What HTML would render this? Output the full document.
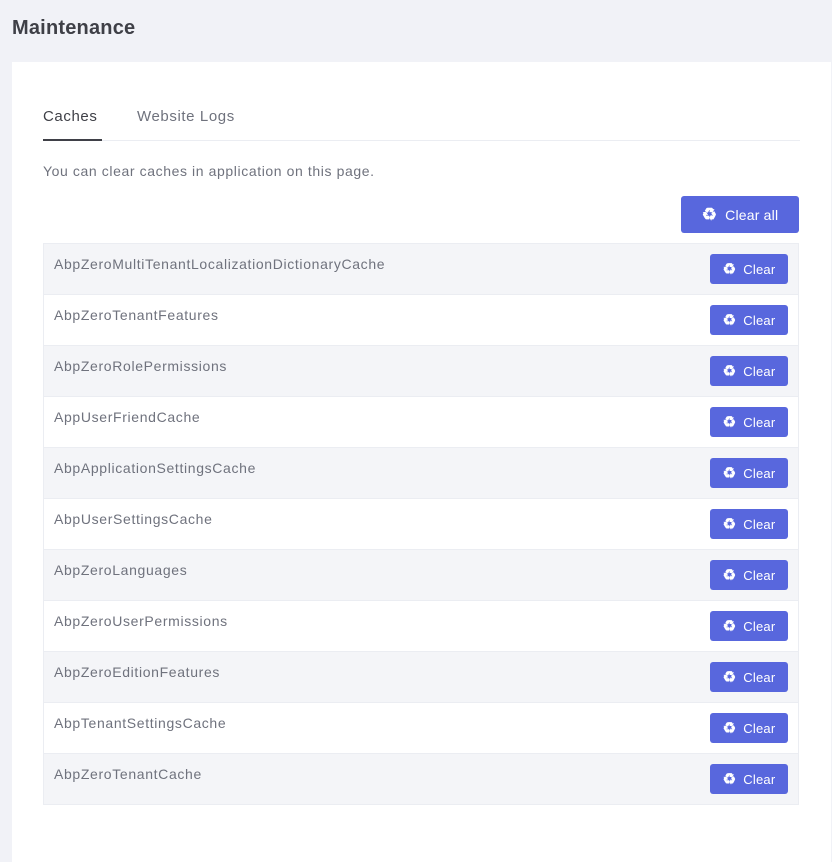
<!DOCTYPE html>
<html><head><meta charset="utf-8"><style>
*{box-sizing:border-box;margin:0;padding:0}
body{width:832px;height:848px;background:#f1f2f7;font-family:"Liberation Sans",sans-serif;overflow:hidden;position:relative;letter-spacing:0.7px}
h1{position:absolute;left:12px;top:17px;font-size:20px;font-weight:bold;color:#3f4047;letter-spacing:0.2px}
.card{position:absolute;left:12px;top:62px;width:819px;height:800px;background:#fff}
.tabs{position:absolute;left:31px;top:44px;width:757px;height:35px;border-bottom:1px solid #ebedf2}
.tab{position:absolute;top:2px;font-size:15px;color:#6f727d;letter-spacing:0.6px}
.tab.a{color:#3f4047;left:0;height:33px;border-bottom:2px solid #3f4047;width:59px}
.desc{position:absolute;left:31px;top:101px;font-size:14px;color:#6f727d;letter-spacing:0.6px}
.btn{position:absolute;background:#5867dd;color:#fff;border-radius:3px;display:flex;align-items:center;justify-content:center;gap:8px;letter-spacing:0.2px}
.btn b{font-size:17px;font-weight:bold;line-height:1}
.big{left:669px;top:134px;width:118px;height:37px;font-size:14px}
.tbl{position:absolute;left:31px;top:181px;width:756px;border:1px solid #ebedf2}
.row{height:51px;position:relative;border-top:1px solid #ebedf2;font-size:14px;color:#6f727d;letter-spacing:0.65px}
.row:first-child{border-top:none;height:50px}
.row:nth-child(odd){background:#f4f5f8}
.row span{position:absolute;left:10px;top:12px}
.sm{right:10px;top:10px;width:78px;height:30px;font-size:13px;gap:7px}
.sm b{font-size:15px}
</style></head><body>
<h1>Maintenance</h1>
<div class="card">
<div class="tabs"><div class="tab a">Caches</div><div class="tab" style="left:94px">Website Logs</div></div>
<div class="desc">You can clear caches in application on this page.</div>
<div class="btn big"><b>♻</b>Clear all</div>
<div class="tbl">
<div class="row"><span>AbpZeroMultiTenantLocalizationDictionaryCache</span><div class="btn sm"><b>♻</b>Clear</div></div>
<div class="row"><span>AbpZeroTenantFeatures</span><div class="btn sm"><b>♻</b>Clear</div></div>
<div class="row"><span>AbpZeroRolePermissions</span><div class="btn sm"><b>♻</b>Clear</div></div>
<div class="row"><span>AppUserFriendCache</span><div class="btn sm"><b>♻</b>Clear</div></div>
<div class="row"><span>AbpApplicationSettingsCache</span><div class="btn sm"><b>♻</b>Clear</div></div>
<div class="row"><span>AbpUserSettingsCache</span><div class="btn sm"><b>♻</b>Clear</div></div>
<div class="row"><span>AbpZeroLanguages</span><div class="btn sm"><b>♻</b>Clear</div></div>
<div class="row"><span>AbpZeroUserPermissions</span><div class="btn sm"><b>♻</b>Clear</div></div>
<div class="row"><span>AbpZeroEditionFeatures</span><div class="btn sm"><b>♻</b>Clear</div></div>
<div class="row"><span>AbpTenantSettingsCache</span><div class="btn sm"><b>♻</b>Clear</div></div>
<div class="row"><span>AbpZeroTenantCache</span><div class="btn sm"><b>♻</b>Clear</div></div>
</div>
</div>
</body></html>
